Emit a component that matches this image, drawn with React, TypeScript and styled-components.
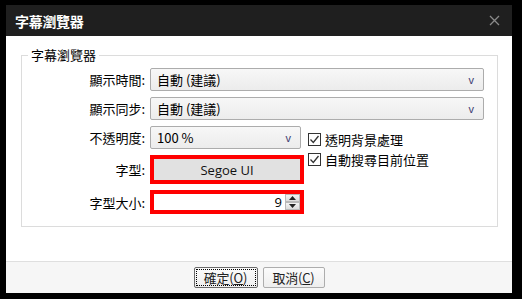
import React from 'react';
import styled, { createGlobalStyle } from 'styled-components';

const GlobalStyle = createGlobalStyle`
  html, body {
    margin: 0;
    padding: 0;
    background: #000;
  }
  body {
    font-family: "Noto Sans CJK TC", "Noto Sans", sans-serif;
    font-size: 13px;
    color: #000;
  }
`;

const Window = styled.div`
  width: 506px;
  height: 288px;
  margin: 5px 10px 6px 6px;
  display: flex;
  flex-direction: column;
  background: #fff;
`;

const TitleBar = styled.div`
  height: 31px;
  flex: none;
  background: #1f1f1f;
  display: flex;
  align-items: center;
  justify-content: space-between;
  padding: 0 11px 0 9px;
  box-sizing: border-box;
`;

const Title = styled.span`
  color: #fff;
  font-size: 14px;
  font-weight: bold;
  letter-spacing: -0.3px;
`;

const CloseButton = styled.button`
  width: 14px;
  height: 14px;
  border: none;
  padding: 0;
  background: transparent;
  display: flex;
  align-items: center;
  justify-content: center;
`;

const Body = styled.div`
  flex: 1;
  display: flex;
  padding: 19px 14px 34px 15px;
`;

const GroupBox = styled.div`
  position: relative;
  flex: 1;
  border: 1px solid #dcdcdc;
  padding: 12px 13px 0 0;
`;

const GroupLegend = styled.span`
  position: absolute;
  top: -10px;
  left: 6px;
  padding: 0 3px;
  background: #fff;
  font-size: 13px;
  line-height: 18px;
`;

const FormGrid = styled.div`
  display: grid;
  grid-template-columns: 124px 154px 1fr;
  grid-template-rows: 23px 23px 23px 29px 24px;
  column-gap: 4px;
  row-gap: 6px;
`;

const Label = styled.label<{ $row: number }>`
  grid-column: 1;
  grid-row: ${(p) => p.$row};
  align-self: center;
  text-align: right;
  padding-right: 1px;
  white-space: nowrap;
`;

const Select = styled.div<{ $row: number; $wide?: boolean }>`
  grid-column: ${(p) => (p.$wide ? '2 / 4' : '2')};
  grid-row: ${(p) => p.$row};
  width: ${(p) => (p.$wide ? 'auto' : '151px')};
  box-sizing: border-box;
  border: 1px solid #acacac;
  border-radius: 2px;
  background: linear-gradient(#f7f7f7, #ececec);
  display: flex;
  align-items: center;
  justify-content: space-between;
  padding: 0 9px 0 6px;
  white-space: nowrap;
`;

const Arrow = styled.span`
  font-family: "Liberation Sans", sans-serif;
  font-size: 11px;
  color: #3c3c70;
`;

const CheckList = styled.div`
  grid-column: 3;
  grid-row: 3 / 5;
  display: flex;
  flex-direction: column;
  gap: 4px;
  padding-top: 5px;
`;

const CheckRow = styled.div`
  height: 16px;
  display: flex;
  align-items: center;
  gap: 4px;
  white-space: nowrap;
`;

const CheckBox = styled.span`
  width: 13px;
  height: 13px;
  box-sizing: border-box;
  border: 1px solid #333;
  background: #fff;
  display: flex;
  align-items: center;
  justify-content: center;
`;

const Highlight = styled.div<{ $row: number }>`
  grid-column: 2;
  grid-row: ${(p) => p.$row};
  border: 4px solid #ff0000;
  display: flex;
`;

const FontButton = styled.div`
  flex: 1;
  background: #e1e1e1;
  display: flex;
  align-items: center;
  justify-content: center;
  font-family: "Open Sans", "Noto Sans", sans-serif;
  font-size: 13px;
  color: #111;
`;

const SpinField = styled.div`
  flex: 1;
  background: #fff;
  display: flex;
  align-items: center;
  justify-content: flex-end;
  gap: 3px;
  padding-right: 0;
`;

const SpinValue = styled.span`
  font-family: "Open Sans", "Noto Sans", sans-serif;
  font-size: 13px;
`;

const SpinButtons = styled.div`
  width: 15px;
  height: 16px;
  display: flex;
  flex-direction: column;
`;

const SpinButton = styled.span`
  flex: 1;
  box-sizing: border-box;
  border: 1px solid #b9b9b9;
  background: linear-gradient(#f4f4f4, #dcdcdc);
  display: flex;
  align-items: center;
  justify-content: center;
`;

const Footer = styled.div`
  height: 32px;
  flex: none;
  box-sizing: border-box;
  border-top: 1px solid #dfdfdf;
  background: #f6f6f6;
  display: flex;
  justify-content: center;
  gap: 5px;
  padding: 5px 0 0 0;
`;

const DialogButton = styled.button<{ $focused?: boolean }>`
  height: 21px;
  width: ${(p) => (p.$focused ? '64px' : '62px')};
  box-sizing: border-box;
  border: 1px solid ${(p) => (p.$focused ? '#6a6a6a' : '#adadad')};
  border-radius: 2px;
  background: linear-gradient(#fbfbfb, #eeeeee);
  font-family: "Noto Sans CJK TC", sans-serif;
  font-size: 13px;
  color: #222;
  padding: 1px;
  display: flex;
`;

const ButtonInner = styled.span<{ $focused?: boolean }>`
  flex: 1;
  display: flex;
  align-items: center;
  justify-content: center;
  border: 1px dotted ${(p) => (p.$focused ? '#000' : 'transparent')};
  line-height: 1;
  letter-spacing: -0.2px;
`;

const Mnemonic = styled.span`
  text-decoration: underline;
`;

const Check = () => (
  <svg width="11" height="11" viewBox="0 0 11 11">
    <path d="M1.5 5.5 L4.3 8.5 L9.5 2" fill="none" stroke="#333" strokeWidth="1.3" />
  </svg>
);

const Triangle = ({ up }: { up?: boolean }) => (
  <svg width="7" height="4" viewBox="0 0 7 4">
    <path d={up ? 'M0 4 L3.5 0 L7 4 Z' : 'M0 0 L3.5 4 L7 0 Z'} fill="#222" />
  </svg>
);

const App: React.FC = () => {
  return (
    <>
      <GlobalStyle />
      <Window>
        <TitleBar>
          <Title>字幕瀏覽器</Title>
          <CloseButton>
            <svg width="11" height="11" viewBox="0 0 11 11">
              <path d="M1 1 L10 10 M10 1 L1 10" stroke="#8a8a8a" strokeWidth="1.3" />
            </svg>
          </CloseButton>
        </TitleBar>
        <Body>
          <GroupBox>
            <GroupLegend>字幕瀏覽器</GroupLegend>
            <FormGrid>
              <Label $row={1}>顯示時間:</Label>
              <Select $row={1} $wide>
                <span>自動 (建議)</span>
                <Arrow>v</Arrow>
              </Select>
              <Label $row={2}>顯示同步:</Label>
              <Select $row={2} $wide>
                <span>自動 (建議)</span>
                <Arrow>v</Arrow>
              </Select>
              <Label $row={3}>不透明度:</Label>
              <Select $row={3}>
                <span>100 %</span>
                <Arrow>v</Arrow>
              </Select>
              <CheckList>
                <CheckRow>
                  <CheckBox><Check /></CheckBox>
                  透明背景處理
                </CheckRow>
                <CheckRow>
                  <CheckBox><Check /></CheckBox>
                  自動搜尋目前位置
                </CheckRow>
              </CheckList>
              <Label $row={4}>字型:</Label>
              <Highlight $row={4}>
                <FontButton>Segoe UI</FontButton>
              </Highlight>
              <Label $row={5}>字型大小:</Label>
              <Highlight $row={5}>
                <SpinField>
                  <SpinValue>9</SpinValue>
                  <SpinButtons>
                    <SpinButton><Triangle up /></SpinButton>
                    <SpinButton><Triangle /></SpinButton>
                  </SpinButtons>
                </SpinField>
              </Highlight>
            </FormGrid>
          </GroupBox>
        </Body>
        <Footer>
          <DialogButton $focused>
            <ButtonInner $focused>
              確定(<Mnemonic>O</Mnemonic>)
            </ButtonInner>
          </DialogButton>
          <DialogButton>
            <ButtonInner>
              取消(<Mnemonic>C</Mnemonic>)
            </ButtonInner>
          </DialogButton>
        </Footer>
      </Window>
    </>
  );
};

export default App;
